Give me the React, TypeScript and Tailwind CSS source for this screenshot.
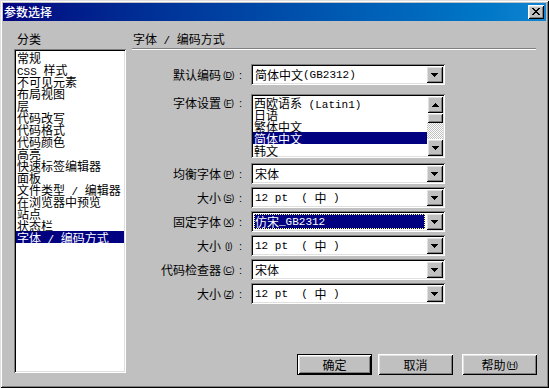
import React from "react";

const sunken =
  "shadow-[inset_1px_1px_0_#808080,inset_-1px_-1px_0_#ffffff,inset_2px_2px_0_#000000,inset_-2px_-2px_0_#dfdfdf]";
const raised =
  "shadow-[inset_1px_1px_0_#ffffff,inset_-1px_-1px_0_#000000,inset_2px_2px_0_#dfdfdf,inset_-2px_-2px_0_#808080]";

const CJK = /[\u2E80-\u9FFF\uFF00-\uFFEF]/;

// CJK runs in Noto, latin runs in a narrow mono so they keep the half-width grid
function T({ s }: { s: string }) {
  const parts = s.split(/([\u2E80-\u9FFF\uFF00-\uFFEF]+)/);
  return (
    <>
      {parts.map((p, i) =>
        p === "" ? null : CJK.test(p) ? (
          <span key={i} className="font-['Noto_Sans_CJK_SC',sans-serif] text-[12px]">
            {p}
          </span>
        ) : (
          <span key={i} className="font-['Liberation_Mono',monospace] text-[11px] whitespace-pre">
            {p}
          </span>
        ),
      )}
    </>
  );
}

const DownArrow = () => (
  <svg width="7" height="4" viewBox="0 0 7 4" shapeRendering="crispEdges">
    <path d="M0 0h7v1h-1v1h-1v1h-1v1h-1v-1h-1v-1h-1v-1h-1z" fill="#000" />
  </svg>
);

const UpArrow = () => (
  <svg width="7" height="4" viewBox="0 0 7 4" shapeRendering="crispEdges">
    <path d="M3 0h1v1h1v1h1v1h1v1h-7v-1h1v-1h1v-1h1z" fill="#000" />
  </svg>
);

const categories = [
  "常规",
  "CSS 样式",
  "不可见元素",
  "布局视图",
  "层",
  "代码改写",
  "代码格式",
  "代码颜色",
  "高亮",
  "快速标签编辑器",
  "面板",
  "文件类型 / 编辑器",
  "在浏览器中预览",
  "站点",
  "状态栏",
  "字体 / 编码方式",
];

const encodings = ["西欧语系 (Latin1)", "日语", "繁体中文", "简体中文", "韩文"];

function Label({ text, hotkey, top }: { text: string; hotkey: string; top?: boolean }) {
  return (
    <div
      className={`w-[113px] flex-none flex justify-end h-[12px] leading-[12px] ${
        top ? "mt-[3px]" : "self-center"
      }`}
    >
      <T s={text} />
      <span className="inline-block w-[15px] text-center font-['Liberation_Sans',sans-serif] text-[9px] tracking-[-0.5px]">
        (<u>{hotkey}</u>)
      </span>
      <span className="inline-block w-[9px] pl-[3px] font-['Liberation_Sans',sans-serif] text-[11px]">:</span>
    </div>
  );
}

function Combo({ value, selected }: { value: string; selected?: boolean }) {
  return (
    <div className={`flex h-[21px] w-[194px] bg-white p-[2px] ${sunken}`}>
      {selected ? (
        <div className="m-[1px] flex flex-1 items-center border border-dotted border-[#ffff80] bg-[#000080] leading-[12px] text-white whitespace-pre">
          <T s={value} />
        </div>
      ) : (
        <div className="flex flex-1 items-center pl-[2px] leading-[12px] whitespace-pre">
          <T s={value} />
        </div>
      )}
      <div className={`flex w-[17px] items-center justify-center bg-[#c0c0c0] ${raised}`}>
        <DownArrow />
      </div>
    </div>
  );
}

function Row({
  label,
  hotkey,
  value,
  selected,
  className = "",
}: {
  label: string;
  hotkey: string;
  value: string;
  selected?: boolean;
  className?: string;
}) {
  return (
    <div className={`flex ${className}`}>
      <Label text={label} hotkey={hotkey} />
      <div className="ml-[6px]">
        <Combo value={value} selected={selected} />
      </div>
    </div>
  );
}

function Button({ label, def, className = "" }: { label: React.ReactNode; def?: boolean; className?: string }) {
  return (
    <div className={`h-[21px] w-[75px] ${def ? "border border-black" : ""} ${className}`}>
      <div
        className={`flex h-full w-full items-center justify-center bg-[#c0c0c0] leading-[12px] ${raised}`}
      >
        {label}
      </div>
    </div>
  );
}

export default function App() {
  return (
    <div
      className={`flex h-[388px] w-[549px] flex-col bg-[#c0c0c0] p-[3px] text-black shadow-[inset_1px_1px_0_#dfdfdf,inset_-1px_-1px_0_#000000,inset_2px_2px_0_#ffffff,inset_-2px_-2px_0_#808080]`}
    >
      {/* Title bar */}
      <div className="flex h-[18px] flex-none items-center bg-linear-to-r from-[#000080] to-[#1084d0] pl-[1px] pr-[2px]">
        <div className="flex-1 font-['Noto_Sans_CJK_SC',sans-serif] text-[12px] leading-[12px] font-medium text-white">
          参数选择
        </div>
        <div className={`flex h-[14px] w-[16px] items-center justify-center bg-[#c0c0c0] ${raised}`}>
          <svg width="8" height="7" viewBox="0 0 8 7" shapeRendering="crispEdges" className="-mt-[1px] -ml-[1px]">
            <path
              d="M0 0h2v1h-2zM6 0h2v1h-2zM1 1h2v1h-2zM5 1h2v1h-2zM2 2h4v1h-4zM3 3h2v1h-2zM2 4h4v1h-4zM1 5h2v1h-2zM5 5h2v1h-2zM0 6h2v1h-2zM6 6h2v1h-2z"
              fill="#000"
            />
          </svg>
        </div>
      </div>

      {/* Body */}
      <div className="flex flex-1 pl-[11px] pr-[10px] pt-[11px]">
        {/* Category list */}
        <div className="flex w-[112px] flex-none flex-col">
          <div className="h-[12px] pl-[3px] leading-[12px]">
            <T s="分类" />
          </div>
          <div className={`mt-[5px] h-[324px] bg-white p-[2px] ${sunken}`}>
            {categories.map((c, i) => (
              <div
                key={c}
                className={`h-[12px] pl-[1px] leading-[12px] whitespace-pre ${
                  i === categories.length - 1 ? "bg-[#000080] text-white" : ""
                }`}
              >
                <T s={c} />
              </div>
            ))}
          </div>
        </div>

        {/* Settings panel */}
        <div className="ml-[6px] flex flex-1 flex-col pb-[10px]">
          <div className="h-[12px] pl-[1px] leading-[12px] whitespace-pre">
            <T s="字体 / 编码方式" />
          </div>
          <div className="mt-[4px] border-t border-b border-t-[#808080] border-b-white" />

          <Row label="默认编码" hotkey="D" value="简体中文(GB2312)" className="mt-[14px]" />

          <div className="mt-[9px] flex">
            <Label text="字体设置" hotkey="F" top />
            <div className={`ml-[6px] flex h-[64px] w-[194px] bg-white p-[2px] ${sunken}`}>
              <div className="flex-1">
                {encodings.map((e) => (
                  <div
                    key={e}
                    className={`h-[12px] pl-[1px] leading-[12px] whitespace-pre ${
                      e === "简体中文" ? "bg-[#000080] text-white" : ""
                    }`}
                  >
                    <T s={e} />
                  </div>
                ))}
              </div>
              <div className="flex w-[16px] flex-col">
                <div className={`flex h-[17px] items-center justify-center bg-[#c0c0c0] ${raised}`}>
                  <UpArrow />
                </div>
                <div className={`h-[10px] bg-[#c0c0c0] ${raised}`} />
                <div className="flex-1 bg-[repeating-conic-gradient(#ffffff_0%_25%,#c0c0c0_0%_50%)] bg-[length:2px_2px]" />
                <div className={`flex h-[17px] items-center justify-center bg-[#c0c0c0] ${raised}`}>
                  <DownArrow />
                </div>
              </div>
            </div>
          </div>

          <Row label="均衡字体" hotkey="P" value="宋体" className="mt-[5px]" />
          <Row label="大小" hotkey="S" value="12 pt  ( 中 )" className="mt-[3px]" />
          <Row label="固定字体" hotkey="X" value="仿宋_GB2312" selected className="mt-[3px]" />
          <Row label="大小" hotkey="I" value="12 pt  ( 中 )" className="mt-[3px]" />
          <Row label="代码检查器" hotkey="C" value="宋体" className="mt-[3px]" />
          <Row label="大小" hotkey="Z" value="12 pt  ( 中 )" className="mt-[3px]" />

          {/* Dialog buttons */}
          <div className="mt-auto flex justify-end">
            <Button label={<T s="确定" />} def />
            <Button label={<T s="取消" />} className="ml-[6px]" />
            <Button
              label={
                <>
                  <T s="帮助" />
                  <span className="ml-[1px] font-['Liberation_Sans',sans-serif] text-[9px] tracking-[-0.5px]">
                    (<u>H</u>)
                  </span>
                </>
              }
              className="ml-[9px] -mr-[1px]"
            />
          </div>
        </div>
      </div>
    </div>
  );
}
